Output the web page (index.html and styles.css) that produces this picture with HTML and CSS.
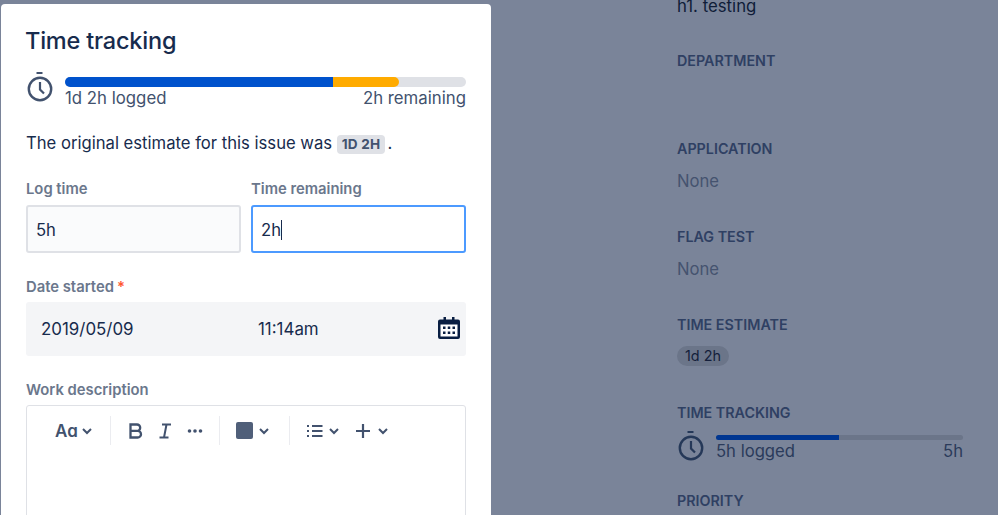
FILE: index.html
```html
<!DOCTYPE html>
<html lang="en">
<head>
    <meta charset="UTF-8">
    <title>Time tracking</title>
    <link rel="stylesheet" href="styles.css">
</head>
<body>
    <div class="page">
        <div class="modal">
            <h1 class="modal-title">Time tracking</h1>

            <div class="tracker">
                <svg class="stopwatch" width="28" height="32" viewBox="0 0 28 32">
                    <path d="M10.500 2h6" fill="none" stroke="#42526e" stroke-width="2"/>
                    <circle cx="14" cy="18" r="11.200" fill="none" stroke="#42526e" stroke-width="2.400"/>
                    <path d="M14 11v7.500l4 4" fill="none" stroke="#42526e" stroke-width="2.200"/>
                </svg>
                <div class="tracker-main">
                    <div class="bar">
                        <div class="bar-logged"></div>
                        <div class="bar-left"></div>
                    </div>
                    <div class="tracker-labels">
                        <span>1d 2h logged</span>
                        <span>2h remaining</span>
                    </div>
                </div>
            </div>

            <p class="estimate">The original estimate for this issue was <span class="lozenge">1D 2H</span><span class="estimate-dot">.</span></p>

            <div class="field-row">
                <div class="field">
                    <div class="label">Log time</div>
                    <div class="input">5h</div>
                </div>
                <div class="field">
                    <div class="label">Time remaining</div>
                    <div class="input input-focus">2h<span class="caret"></span></div>
                </div>
            </div>

            <div class="label label-date">Date started<span class="required">*</span></div>
            <div class="date-box">
                <span class="date-value">2019/05/09</span>
                <span class="time-value">11:14am</span>
                <svg class="calendar" width="24" height="24" viewBox="0 0 24 24">
                    <path d="M1 5.500a2 2 0 0 1 2-2h3.500V1H9v2.500h6V1h2.500v2.500H21a2 2 0 0 1 2 2V21a2 2 0 0 1-2 2H3a2 2 0 0 1-2-2z" fill="#091e42"/>
                    <rect x="3.500" y="8.500" width="17" height="12" fill="#fff"/>
                    <path d="M6 10.500h2.500V13H6zM10.750 10.500h2.500V13h-2.500zM15.500 10.500H18V13h-2.500zM6 15.500h2.500V18H6zM10.750 15.500h2.500V18h-2.500zM15.500 15.500H18V18h-2.500z" fill="#091e42"/>
                </svg>
            </div>

            <div class="label label-work">Work description</div>
            <div class="editor">
                <div class="toolbar">
                    <div class="tool-group group-text">
                        <span class="tool-aa">Aɑ</span>
                        <svg class="chevron" width="12" height="8" viewBox="0 0 12 8"><path d="M2 2l4 4 4-4" fill="none" stroke="#42526e" stroke-width="2"/></svg>
                    </div>
                    <div class="tool-group group-format">
                        <svg width="16" height="18" viewBox="0 0 16 18"><path d="M1.500 2.500h6.500a3.200 3.200 0 0 1 0 6.400H1.500zM1.500 8.900h7.200a3.300 3.300 0 0 1 0 6.600H1.500z" fill="none" stroke="#42526e" stroke-width="2.300"/></svg>
                        <svg width="16" height="18" viewBox="0 0 16 18"><path d="M4 2.500h9M1.500 15.500h9M8.500 2.500l-2.500 13" fill="none" stroke="#42526e" stroke-width="2"/></svg>
                        <svg width="16" height="6" viewBox="0 0 16 6"><circle cx="2.500" cy="3" r="1.800" fill="#42526e"/><circle cx="8" cy="3" r="1.800" fill="#42526e"/><circle cx="13.500" cy="3" r="1.800" fill="#42526e"/></svg>
                    </div>
                    <div class="tool-group group-color">
                        <span class="swatch"></span>
                        <svg class="chevron" width="12" height="8" viewBox="0 0 12 8"><path d="M2 2l4 4 4-4" fill="none" stroke="#42526e" stroke-width="2"/></svg>
                    </div>
                    <div class="tool-group group-insert">
                        <svg width="16" height="14" viewBox="0 0 16 14"><path d="M5 2h10.500M5 7h10.500M5 12h10.500M0 2h2M0 7h2M0 12h2" fill="none" stroke="#42526e" stroke-width="1.800"/></svg>
                        <svg class="chevron" width="12" height="8" viewBox="0 0 12 8"><path d="M2 2l4 4 4-4" fill="none" stroke="#42526e" stroke-width="2"/></svg>
                        <svg class="plus" width="16" height="16" viewBox="0 0 16 16"><path d="M8 1v14M1 8h14" fill="none" stroke="#42526e" stroke-width="2.200"/></svg>
                        <svg class="chevron" width="12" height="8" viewBox="0 0 12 8"><path d="M2 2l4 4 4-4" fill="none" stroke="#42526e" stroke-width="2"/></svg>
                    </div>
                </div>
            </div>
        </div>

        <div class="side">
            <div class="side-text">h1. testing</div>

            <div class="side-label side-first">DEPARTMENT</div>
            <div class="side-label side-application">APPLICATION</div>
            <div class="side-none">None</div>
            <div class="side-label">FLAG TEST</div>
            <div class="side-none">None</div>
            <div class="side-label">TIME ESTIMATE</div>
            <div class="side-pill-row"><span class="side-pill">1d 2h</span></div>
            <div class="side-label side-tracking">TIME TRACKING</div>
            <div class="side-tracker">
                <svg class="side-watch" width="28" height="32" viewBox="0 0 28 32">
                    <path d="M10.500 2h6" fill="none" stroke="#253858" stroke-width="2"/>
                    <circle cx="14" cy="18" r="11.200" fill="none" stroke="#253858" stroke-width="2.400"/>
                    <path d="M14 11v7.500l4 4" fill="none" stroke="#253858" stroke-width="2.200"/>
                </svg>
                <div class="side-tracker-main">
                    <div class="side-bar"><div class="side-bar-fill"></div></div>
                    <div class="side-tracker-labels">
                        <span>5h logged</span>
                        <span>5h</span>
                    </div>
                </div>
            </div>
            <div class="side-label side-priority">PRIORITY</div>
        </div>
    </div>
</body>
</html>
```

FILE: styles.css
```css
html, body {
    margin: 0;
    padding: 0;
    height: 100%;
    overflow: hidden;
    background-color: #7a8499;
    font-family: Inter, 'Liberation Sans', sans-serif;
}

.page {
    display: flex;
    align-items: flex-start;
    height: 515px;
    overflow: hidden;
}

.modal {
    box-sizing: border-box;
    width: 490px;
    height: 540px;
    margin: 4px 0 0 1px;
    padding: 23px 25px 0 25px;
    background-color: #fff;
    border-radius: 4px;
    flex-shrink: 0;
}

.modal-title {
    margin: 0 0 0 -1px;
    font-size: 23.5px;
    line-height: 28px;
    font-weight: 500;
    color: #172b4d;
    letter-spacing: -0.2px;
}

.tracker {
    display: flex;
    margin-top: 22px;
}

.stopwatch {
    flex-shrink: 0;
    margin: -6px 11px 0 0;
}

.tracker-main {
    flex: 1;
}

.bar {
    display: flex;
    height: 10px;
    border-radius: 5px;
    background-color: #dfe1e6;
    overflow: hidden;
}

.bar-logged {
    width: 268px;
    background-color: #0052cc;
}

.bar-left {
    width: 66px;
    background-color: #ffab00;
    border-radius: 0 5px 5px 0;
}

.tracker-labels {
    display: flex;
    justify-content: space-between;
    margin-top: -1px;
    font-size: 16.8px;
    line-height: 24px;
    color: #42526e;
}

.estimate {
    margin: 21px 0 0;
    font-size: 16.65px;
    line-height: 24px;
    color: #172b4d;
}

.lozenge {
    display: inline-block;
    padding: 0 5px;
    background-color: #dfe1e6;
    border-radius: 4px;
    font-size: 13.6px;
    line-height: 19px;
    font-weight: 700;
    letter-spacing: 0.2px;
    color: #42526e;
}

.estimate-dot {
    margin-left: 2px;
}

.field-row {
    display: flex;
    gap: 10px;
    margin-top: 24px;
}

.field {
    flex: 1;
}

.label {
    font-size: 14.8px;
    line-height: 20px;
    font-weight: 600;
    color: #6b778c;
}

.input {
    box-sizing: border-box;
    height: 48px;
    margin-top: 6px;
    padding: 0 8px;
    border: 2px solid #dfe1e6;
    border-radius: 3px;
    background-color: #fafbfc;
    font-size: 16.65px;
    line-height: 46px;
    color: #172b4d;
}

.input-focus {
    border-color: #4c9aff;
    background-color: #fff;
}

.caret {
    display: inline-block;
    width: 1px;
    height: 20px;
    background-color: #172b4d;
    vertical-align: -4px;
}

.label-date {
    margin-top: 24px;
}

.required {
    margin-left: 3px;
    color: #ff5630;
}

.date-box {
    display: flex;
    align-items: center;
    height: 54px;
    margin-top: 5px;
    padding: 0 5px 0 15px;
    background-color: #f4f5f7;
    border-radius: 3px;
    font-size: 16.9px;
    color: #172b4d;
}

.date-value {
    width: 217px;
}

.time-value {
    flex: 1;
}

.calendar {
    margin-top: -2px;
}

.label-work {
    margin-top: 24px;
}

.editor {
    height: 120px;
    margin-top: 5px;
    border: 1px solid #dfe1e6;
    border-radius: 3px;
}

.toolbar {
    display: flex;
    align-items: center;
    height: 29px;
    padding: 10px 0 0 28px;
}

.tool-group {
    display: flex;
    align-items: center;
    height: 29px;
    border-right: 1px solid #ebecf0;
}

.tool-group:last-child {
    border-right: none;
}

.group-text {
    width: 55px;
    gap: 3px;
}

.group-format {
    width: 109px;
    padding-left: 18px;
    box-sizing: border-box;
    gap: 13px;
}

.group-color {
    width: 70px;
    padding-left: 16px;
    box-sizing: border-box;
    gap: 5px;
}

.group-insert {
    padding-left: 17px;
    gap: 5px;
}

.plus {
    margin-left: 10px;
}

.plus + .chevron {
    margin-left: 1px;
}

.tool-aa {
    font-size: 17px;
    font-weight: 600;
    color: #42526e;
}

.swatch {
    width: 17px;
    height: 17px;
    border-radius: 2px;
    background-color: #505f79;
}

.side {
    flex-shrink: 0;
    margin: -6px 0 0 186px;
    width: 286px;
}

.side-text {
    font-size: 16.8px;
    line-height: 24px;
    color: #0f1c38;
}

.side-label {
    margin-top: 34px;
    font-size: 14.3px;
    line-height: 20px;
    font-weight: 600;
    color: #2f4063;
}

.side-first {
    margin-top: 33px;
}

.side-application {
    margin-top: 68px;
}

.side-none {
    margin-top: 10px;
    font-size: 16.65px;
    line-height: 24px;
    color: #45536f;
}

.side-pill-row {
    margin-top: 11px;
    display: flex;
}

.side-pill {
    padding: 0 8px;
    background-color: #6b7589;
    border-radius: 10px;
    font-size: 14.4px;
    line-height: 20px;
    color: #141f3b;
}

.side-tracking {
    margin-top: 37px;
}

.side-tracker {
    display: flex;
    margin-top: 12px;
}

.side-watch {
    flex-shrink: 0;
    margin: -5px 11px 0 0;
}

.side-tracker-main {
    flex: 1;
}

.side-bar {
    height: 5px;
    border-radius: 3px;
    background-color: #6b7589;
    overflow: hidden;
}

.side-bar-fill {
    width: 123px;
    height: 5px;
    background-color: #003691;
}

.side-tracker-labels {
    display: flex;
    justify-content: space-between;
    margin-top: -1px;
    font-size: 16.65px;
    line-height: 24px;
    color: #2b3b5b;
}

.side-priority {
    margin-top: 28px;
}
```
